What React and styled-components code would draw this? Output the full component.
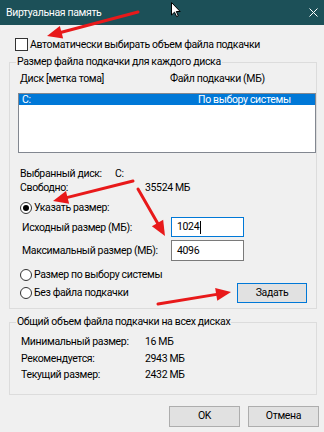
import React from 'react';
import styled, { createGlobalStyle } from 'styled-components';

const GlobalStyle = createGlobalStyle`
  html, body { margin: 0; padding: 0; background: #f0f0f0; }
  body {
    font-family: Roboto, "Noto Sans", sans-serif;
    font-size: 10.5px;
    letter-spacing: -0.35px;
    color: #000;
  }
  * { box-sizing: border-box; }
`;

const Window = styled.div`
  position: relative;
  width: 324px;
  height: 432px;
  overflow: hidden;
  background: #f0f0f0;
  display: flex;
  flex-direction: column;
`;

const TitleBar = styled.div`
  height: 25px;
  flex: none;
  background: #1c5058;
  color: #fff;
  display: flex;
  align-items: center;
  justify-content: space-between;
  padding: 0 6px 0 6px;
  line-height: 14px;
`;

const CloseIcon = styled.svg`
  width: 9px;
  height: 9px;
`;

const CheckRow = styled.div`
  margin-top: 13px;
  padding-left: 15px;
  height: 13px;
  display: flex;
  align-items: center;
  gap: 2px;
  line-height: 14px;
`;

const CheckBox = styled.span`
  width: 13px;
  height: 13px;
  flex: none;
  border: 1px solid #333;
  background: #fff;
`;

const Group = styled.fieldset`
  margin: ${p => p.$top}px 0 0 9px;
  width: 308px;
  min-width: 0;
  border: 1px solid #dcdcdc;
  padding: 0 0 ${p => p.$bottom}px 8px;
`;

const Legend = styled.legend`
  margin-left: -2px;
  padding: 0 1px;
  line-height: 14px;
`;

const HeaderRow = styled.div`
  margin-top: 3px;
  display: flex;
  line-height: 14px;
  padding-left: 2px;
`;

const Cell = styled.span`
  width: ${p => (p.$w ? `${p.$w}px` : 'auto')};
  flex: none;
  white-space: nowrap;
`;

const ListBox = styled.div`
  margin-top: 7px;
  height: 60px;
  border: 1px solid #828790;
  background: #fff;
`;

const ListRow = styled.div`
  height: 11px;
  line-height: 11px;
  display: flex;
  padding-left: 3px;
  background: ${p => (p.$selected ? '#0078d7' : 'transparent')};
  color: ${p => (p.$selected ? '#fff' : '#000')};
`;

const InfoRow = styled.div`
  margin-top: ${p => p.$top || 0}px;
  display: flex;
  line-height: ${p => p.$lh || 14}px;
  padding-left: ${p => p.$indent || 2}px;
`;

const RadioRow = styled.div`
  margin-top: ${p => p.$top || 0}px;
  display: flex;
  align-items: center;
  gap: 2px;
  padding-left: 2px;
  height: 14px;
  line-height: 14px;
`;

const Radio = styled.span`
  width: 12px;
  height: 12px;
  flex: none;
  border-radius: 50%;
  border: 1px solid #333;
  background: #fff;
  display: flex;
  align-items: center;
  justify-content: center;
  &::after {
    content: '';
    width: 6px;
    height: 6px;
    border-radius: 50%;
    background: ${p => (p.$checked ? '#000' : 'transparent')};
  }
`;

const InputRow = styled.div`
  margin-top: ${p => p.$top}px;
  display: flex;
  align-items: center;
  padding-left: 4px;
`;

const InputLabel = styled.span`
  width: 149px;
  flex: none;
  white-space: nowrap;
`;

const TextBox = styled.div`
  width: 73px;
  height: ${p => p.$h}px;
  border: 1px solid ${p => (p.$focused ? '#0078d7' : '#7a7a7a')};
  background: #fff;
  padding-left: 5px;
  display: flex;
  align-items: center;
  line-height: 14px;
`;

const Caret = styled.span`
  width: 1px;
  height: 13px;
  background: #000;
  margin-left: 1px;
`;

const LastRow = styled.div`
  margin-top: 1px;
  height: 20px;
  display: flex;
  align-items: center;
  justify-content: space-between;
  padding-right: 9px;
`;

const RadioInline = styled.div`
  display: flex;
  align-items: center;
  gap: 2px;
  padding-left: 2px;
  line-height: 14px;
`;

const Button = styled.div`
  width: ${p => p.$w}px;
  height: ${p => p.$h}px;
  flex: none;
  background: #e1e1e1;
  border: 1px solid ${p => (p.$default ? '#0078d7' : '#adadad')};
  display: flex;
  align-items: center;
  justify-content: center;
  line-height: 14px;
`;

const Footer = styled.div`
  margin-top: 11px;
  display: flex;
  justify-content: flex-end;
  gap: 8px;
  padding-right: 5px;
`;

const Overlay = styled.svg`
  position: absolute;
  left: 0;
  top: 0;
  width: 324px;
  height: 432px;
  pointer-events: none;
`;

function Arrow({ x1, y1, x2, y2, len = 15, half = 6.5 }) {
  const dx = x2 - x1;
  const dy = y2 - y1;
  const d = Math.hypot(dx, dy);
  const ux = dx / d;
  const uy = dy / d;
  const bx = x2 - ux * len;
  const by = y2 - uy * len;
  const nx = -uy;
  const ny = ux;
  const pts = `${x2},${y2} ${bx + nx * half},${by + ny * half} ${bx - nx * half},${by - ny * half}`;
  return (
    <g>
      <line x1={x1} y1={y1} x2={bx + ux * 2} y2={by + uy * 2} stroke="#e8191a" strokeWidth="3" strokeLinecap="round" />
      <polygon points={pts} fill="#e8191a" />
    </g>
  );
}

export default function App() {
  return (
    <>
      <GlobalStyle />
      <Window>
        <TitleBar>
          <span>Виртуальная память</span>
          <CloseIcon viewBox="0 0 9 9">
            <path d="M0.5 0.5 L8.5 8.5 M8.5 0.5 L0.5 8.5" stroke="#fff" strokeWidth="1" fill="none" />
          </CloseIcon>
        </TitleBar>

        <CheckRow>
          <CheckBox />
          <span>Автоматически выбирать объем файла подкачки</span>
        </CheckRow>

        <Group $top={4} $bottom={5}>
          <Legend>Размер файла подкачки для каждого диска</Legend>
          <HeaderRow>
            <Cell $w={150}>Диск [метка тома]</Cell>
            <Cell>Файл подкачки (МБ)</Cell>
          </HeaderRow>
          <ListBox>
            <ListRow $selected>
              <Cell $w={176}>C:</Cell>
              <Cell>По выбору системы</Cell>
            </ListRow>
          </ListBox>

          <InfoRow $top={14}>
            <Cell $w={95}>Выбранный диск:</Cell>
            <Cell>C:</Cell>
          </InfoRow>
          <InfoRow>
            <Cell $w={125}>Свободно:</Cell>
            <Cell>35524 МБ</Cell>
          </InfoRow>

          <RadioRow $top={6}>
            <Radio $checked />
            <span>Указать размер:</span>
          </RadioRow>

          <InputRow $top={2}>
            <InputLabel>Исходный размер (МБ):</InputLabel>
            <TextBox $focused $h={20}>
              1024
              <Caret />
            </TextBox>
          </InputRow>
          <InputRow $top={3}>
            <InputLabel>Максимальный размер (МБ):</InputLabel>
            <TextBox $h={21}>4096</TextBox>
          </InputRow>

          <RadioRow $top={7}>
            <Radio />
            <span>Размер по выбору системы</span>
          </RadioRow>

          <LastRow>
            <RadioInline>
              <Radio />
              <span>Без файла подкачки</span>
            </RadioInline>
            <Button $default $w={70} $h={20}>Задать</Button>
          </LastRow>
        </Group>

        <Group $top={6} $bottom={10}>
          <Legend>Общий объем файла подкачки на всех дисках</Legend>
          <InfoRow $top={5} $lh={16.5} $indent={3}>
            <Cell $w={124}>Минимальный размер:</Cell>
            <Cell>16 МБ</Cell>
          </InfoRow>
          <InfoRow $lh={16.5} $indent={3}>
            <Cell $w={124}>Рекомендуется:</Cell>
            <Cell>2943 МБ</Cell>
          </InfoRow>
          <InfoRow $lh={16.5} $indent={3}>
            <Cell $w={124}>Текущий размер:</Cell>
            <Cell>2432 МБ</Cell>
          </InfoRow>
        </Group>

        <Footer>
          <Button $w={71} $h={21}>OK</Button>
          <Button $w={71} $h={21}>Отмена</Button>
        </Footer>

        <Overlay viewBox="0 0 324 432">
          <Arrow x1={138} y1={12} x2={47} y2={36} />
          <Arrow x1={133} y1={181} x2={53} y2={201} />
          <Arrow x1={138} y1={189} x2={165} y2={236} />
          <Arrow x1={158} y1={304} x2={231} y2={292} />
          <path
            d="M171.5 2.5 L171.5 15 L174.5 12.2 L176.6 16.6 L178.3 15.8 L176.3 11.5 L180.2 11.5 Z"
            fill="#fff"
            stroke="#000"
            strokeWidth="1"
            strokeLinejoin="miter"
          />
        </Overlay>
      </Window>
    </>
  );
}
